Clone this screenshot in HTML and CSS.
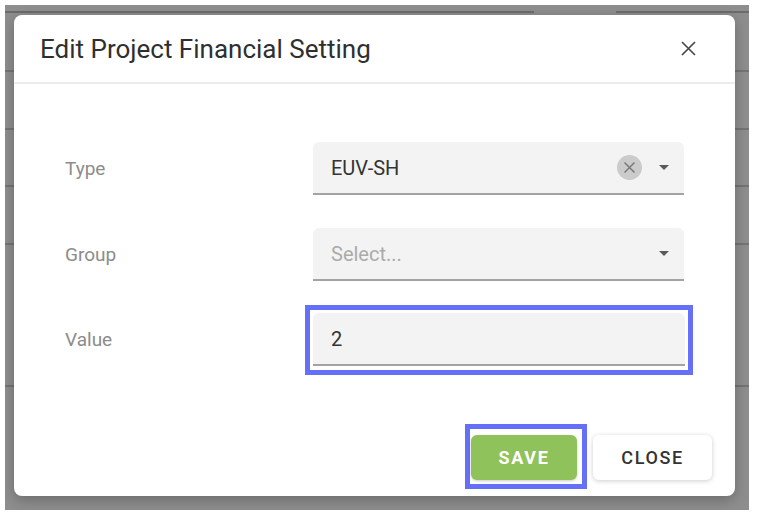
FILE: index.html
```html
<!DOCTYPE html>
<html lang="en">
<head>
  <meta charset="UTF-8">
  <title>Edit Project Financial Setting</title>
  <link rel="stylesheet" href="styles.css">
</head>
<body>

<div class="page">
  <div class="backdrop">
    <div class="head-line"><span class="seg first"></span><span class="seg"></span></div>
    <div class="row r1"></div>
    <div class="row r2"></div>
    <div class="row r3"></div>
    <div class="row r4"></div>
    <div class="row r5"></div>
  </div>

  <div class="modal">
    <div class="modal-header">
      <h2>Edit Project Financial Setting</h2>
      <svg class="close-x" width="15" height="15" viewBox="0 0 15 15">
        <path d="M1 1 L14 14 M14 1 L1 14" stroke="#444" stroke-width="1.6" fill="none"/>
      </svg>
    </div>

    <div class="modal-body">
      <div class="form-row">
        <label>Type</label>
        <div class="field">
          <span class="val">EUV-SH</span>
          <span class="clear">
            <svg width="13" height="13" viewBox="0 0 13 13">
              <path d="M1.5 1.5 L11.5 11.5 M11.5 1.5 L1.5 11.5" stroke="#7a7a7a" stroke-width="1.5" fill="none"/>
            </svg>
          </span>
          <span class="caret"></span>
        </div>
      </div>
      <div class="form-row">
        <label>Group</label>
        <div class="field">
          <span class="val placeholder">Select...</span>
          <span class="caret"></span>
        </div>
      </div>
      <div class="form-row">
        <label>Value</label>
        <div class="mark field-mark">
          <div class="field">
            <span class="val">2</span>
          </div>
        </div>
      </div>
    </div>

    <div class="modal-footer">
      <span class="mark save-mark">
        <button class="btn save">SAVE</button>
      </span>
      <button class="btn close">CLOSE</button>
    </div>
  </div>
</div>

</body>
</html>
```

FILE: styles.css
```css
body {
  margin: 0;
  background: #fff;
  font-family: Roboto, "Liberation Sans", Arial, sans-serif;
}
.page {
  position: relative;
  margin: 5px 9px 6px 5px;
  height: 505px;
  background: #8e8e8e;
  overflow: hidden;
}
.head-line {
  display: flex;
  gap: 82px;
  padding-top: 6px;
}
.seg {
  height: 2px;
  background: #6c6c6c;
  flex: 1;
}
.seg.first {
  flex: 0 0 529px;
}
.row {
  border-bottom: 2px solid #747474;
}
.r1 { height: 57px; }
.r2 { height: 56px; }
.r3 { height: 55px; }
.r4 { height: 56px; }
.r5 { height: 140px; }

.modal {
  position: absolute;
  left: 9px;
  top: 10px;
  width: 721px;
  height: 481px;
  background: #fff;
  border-radius: 8px;
  box-shadow: 0 4px 14px rgba(0, 0, 0, 0.25);
  display: flex;
  flex-direction: column;
}
.modal-header {
  height: 67px;
  display: flex;
  align-items: center;
  justify-content: space-between;
  padding: 0 39px 0 26px;
  border-bottom: 2px solid #ececec;
}
.modal-header h2 {
  margin: 0;
  font-size: 26px;
  font-weight: 400;
  color: #2f2f2f;
}
.modal-body {
  padding: 58px 51px 0 51px;
  display: flex;
  flex-direction: column;
  gap: 33px;
}
.form-row {
  display: grid;
  grid-template-columns: 248px 371px;
  align-items: center;
}
.form-row label {
  font-size: 19px;
  color: #8c8c8c;
}
.field {
  height: 51px;
  box-sizing: content-box;
  background: #f3f3f3;
  border-radius: 6px 6px 0 0;
  border-bottom: 2px solid #a3a3a3;
  display: flex;
  align-items: center;
  padding: 0 15px 0 18px;
}
.field .val {
  flex: 1;
  font-size: 20px;
  color: #333;
}
.field .placeholder {
  color: #ababab;
}
.clear {
  width: 25px;
  height: 25px;
  border-radius: 50%;
  background: #cbcbcb;
  display: flex;
  align-items: center;
  justify-content: center;
  margin-right: 17px;
}
.caret {
  width: 0;
  height: 0;
  border-left: 5px solid transparent;
  border-right: 5px solid transparent;
  border-top: 5px solid #5a5a5a;
}
.mark {
  border: 5px solid #666ff8;
}
.field-mark {
  padding: 3px 3px 4px 3px;
  margin: -9px -9px -10px -8px;
}
.modal-footer {
  margin-top: auto;
  display: flex;
  justify-content: flex-end;
  align-items: flex-end;
  gap: 6px;
  padding: 0 23px 7px 0;
}
.save-mark {
  display: inline-block;
  padding: 6px 5px 4px 1px;
}
.btn {
  display: block;
  height: 45px;
  border: none;
  border-radius: 6px;
  font-family: Roboto, "Liberation Sans", Arial, sans-serif;
  font-size: 18px;
  letter-spacing: 1.6px;
  cursor: pointer;
}
.save {
  width: 106px;
  background: #8fc25a;
  color: #fff;
  font-weight: 700;
  box-shadow: 0 1px 3px rgba(0, 0, 0, 0.2);
}
.close {
  width: 119px;
  margin-bottom: 9px;
  background: #fff;
  color: #333;
  font-weight: 500;
  box-shadow: 0 1px 5px rgba(0, 0, 0, 0.2);
}
```
